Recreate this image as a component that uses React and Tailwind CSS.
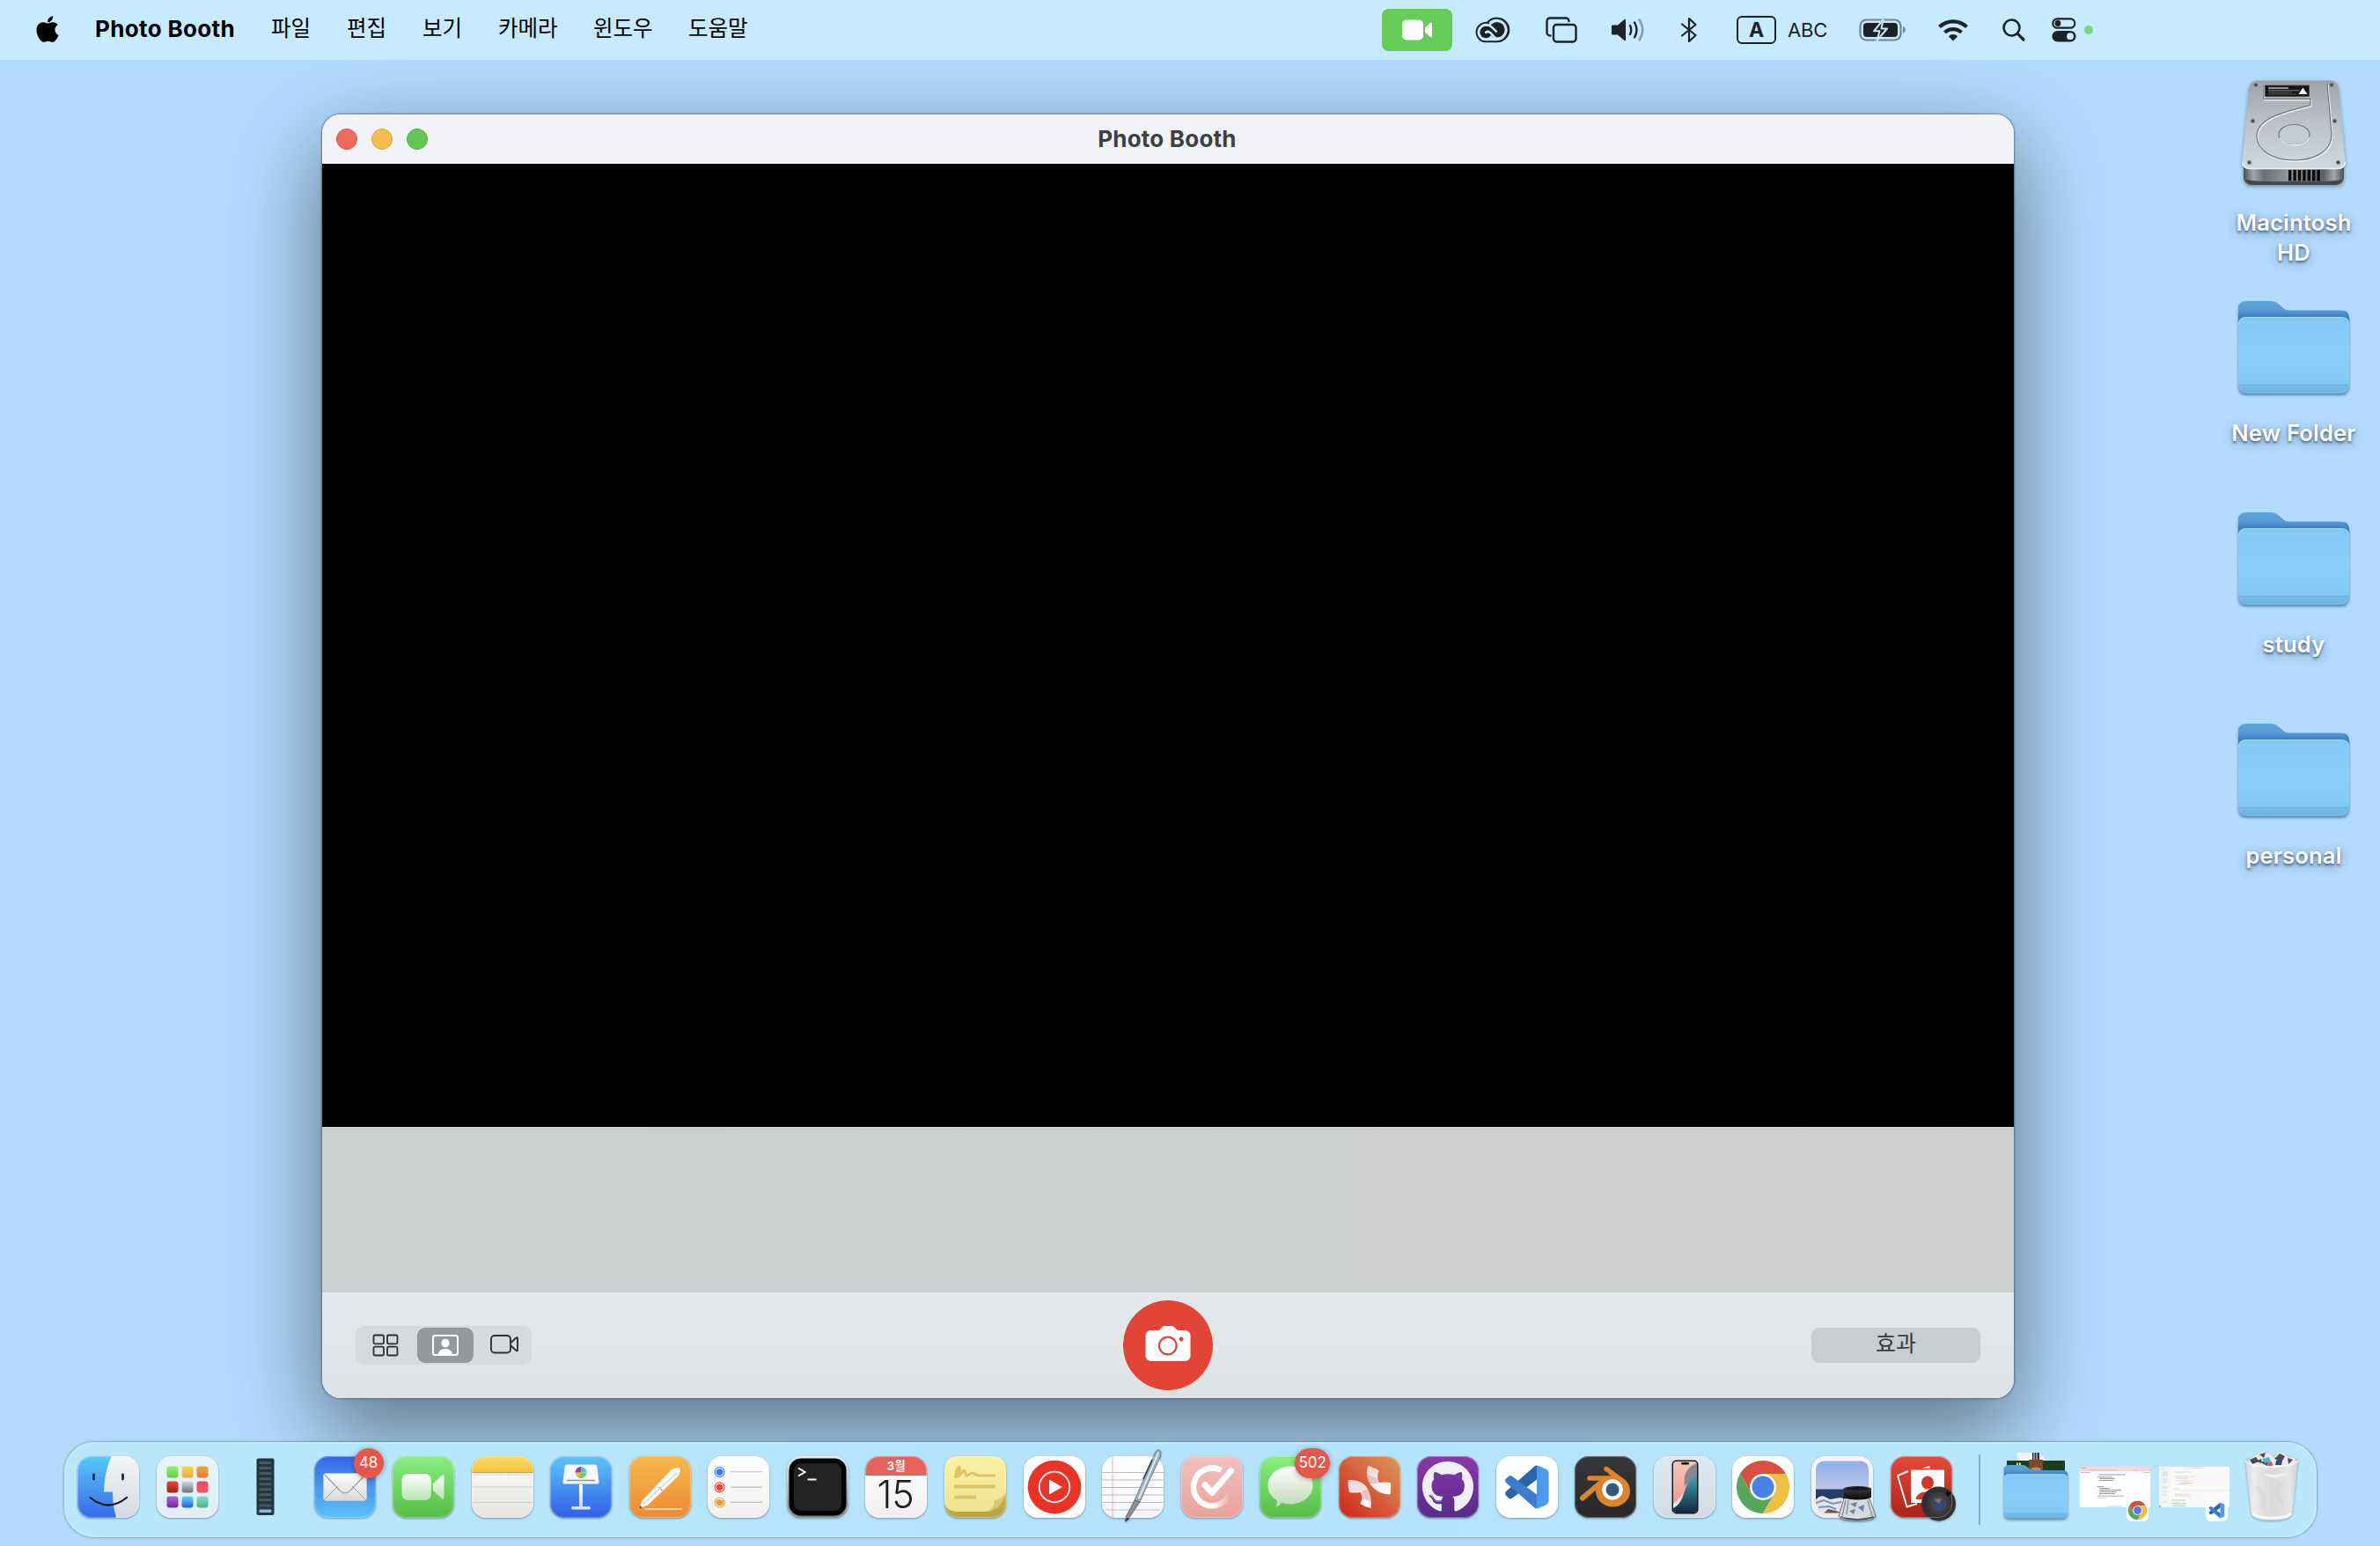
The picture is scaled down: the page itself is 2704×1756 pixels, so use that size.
import React from "react";
import { FaApple, FaGithub } from "react-icons/fa";

const FONT = "font-['Inter','Noto_Sans_CJK_KR',sans-serif]";

/* ---------- menu bar ---------- */

function MenuItem({ children, className }) {
  return <span className={`block whitespace-nowrap text-[24.5px] leading-[36px] ${className}`}>{children}</span>;
}

function StatusIcons() {
  return (
    <div className="flex h-[68px] items-center text-[#1c2328]">
      <div className="flex h-[48px] w-[80px] items-center justify-center rounded-[8px] bg-[#64cc57]">
        <svg width="36" height="24" viewBox="0 0 36 24" fill="#fff">
          <rect x="1" y="0.5" width="24" height="23" rx="5" />
          <path d="M27 9.5 L33 4 Q35 2.500 35 5 V19 Q35 21.500 33 20 L27 14.500 Z" />
        </svg>
      </div>
      <svg className="ml-[26px]" width="40" height="30" viewBox="0 0 40 30" fill="none" stroke="currentColor">
        <path d="M12 28.300 H25 A13.300 13.300 0 1 0 13.800 6.800 M25 28.300 A13.300 13.300 0 0 0 25 1.700 M12 28.300 A10.700 10.700 0 1 1 16 7.600" strokeWidth="2" />
        <circle cx="24.800" cy="14.800" r="8.800" fill="currentColor" stroke="none" />
        <circle cx="12.200" cy="17.500" r="6.800" fill="currentColor" stroke="none" />
        <path d="M12 11 H19 L28 20 L24 23.500 H20 Z" fill="currentColor" stroke="none" />
        <path d="M12.200 17.800 Q14.500 15.600 17.300 18.200 L21.500 22.800 Q24 25.400 27 25" stroke="#c7eaff" strokeWidth="2.600" strokeLinecap="round" />
        <path d="M12.500 9.300 Q16.500 9.300 19.500 12.300 L23.800 16.700" stroke="#c7eaff" strokeWidth="2.400" strokeLinecap="round" />
      </svg>
      <svg className="ml-[40px]" width="36" height="30" viewBox="0 0 36 30" fill="none" stroke="currentColor" strokeWidth="2.400">
        <path d="M6.500 21.500 H5 a3.500 3.500 0 0 1 -3.500 -3.500 V5 A3.500 3.500 0 0 1 5 1.500 H23 A3.500 3.500 0 0 1 26.500 5 V6" />
        <rect x="9" y="9" width="25.500" height="19.500" rx="3.500" />
      </svg>
      <svg className="ml-[38px]" width="40" height="28" viewBox="0 0 40 28" fill="none" stroke="currentColor" strokeWidth="2.400" strokeLinecap="round">
        <path d="M1 9.500 Q1 8.500 2 8.500 H8 L15.500 2 Q17 1 17 3 V25 Q17 27 15.500 26 L8 19.500 H2 Q1 19.500 1 18.500 Z" fill="currentColor" stroke="none" />
        <path d="M22 9 Q24.500 14 22 19" />
        <path d="M27 5.500 Q32 14 27 22.500" />
        <path d="M32.500 2.500 Q40 14 32.500 25.500" opacity=".4" />
      </svg>
      <svg className="ml-[39px]" width="20" height="30" viewBox="0 0 20 30" fill="none" stroke="currentColor" strokeWidth="2.200" strokeLinejoin="round" strokeLinecap="round">
        <path d="M2 8.500 L17.500 21 L10 28 V2 L17.500 9 L2 21.500" />
      </svg>
      <div className="ml-[44px] flex h-[32px] w-[45px] items-center justify-center rounded-[6px] border-[2.500px] border-[#1c2328] text-[23px] font-bold leading-none">A</div>
      <span className="ml-[13px] w-[47px] text-[22px] leading-[30px] tracking-[-0.2px]">ABC</span>
      <svg className="ml-[34px]" width="54" height="26" viewBox="0 0 54 26">
        <rect x="1.500" y="1.500" width="46" height="23" rx="7" fill="none" stroke="#1c2328" strokeOpacity=".5" strokeWidth="2.200" />
        <path d="M50 9 Q53 10.500 53 13 Q53 15.500 50 17 Z" fill="#1c2328" fillOpacity=".5" />
        <rect x="5" y="5" width="39" height="16" rx="4" fill="#1c2328" />
        <path d="M27.500 1.500 L17 14.300 H23.500 L20.500 25 L32 11.500 H25.500 Z" fill="#1c2328" stroke="#c7eaff" strokeWidth="2" strokeLinejoin="round" />
      </svg>
      <svg className="ml-[35px]" width="36" height="26" viewBox="0 0 36 26" fill="none" stroke="currentColor" strokeWidth="4.200">
        <path d="M2.500 9.600 A22.500 22.500 0 0 1 33.500 9.600" />
        <path d="M8.500 15.800 A14 14 0 0 1 27.500 15.800" />
        <path d="M18 25.500 L12.800 20.200 A7.500 7.500 0 0 1 23.200 20.200 Z" fill="currentColor" stroke="none" />
      </svg>
      <svg className="ml-[37px]" width="28" height="28" viewBox="0 0 28 28" fill="none" stroke="currentColor" strokeLinecap="round">
        <circle cx="11.500" cy="11.500" r="9" strokeWidth="2.600" />
        <path d="M18.300 18.300 L25 25" strokeWidth="3.200" />
      </svg>
      <svg className="ml-[29px]" width="28" height="28" viewBox="0 0 28 28">
        <rect x="1.300" y="1.300" width="25" height="10.400" rx="5.200" fill="none" stroke="#1c2328" strokeWidth="2.200" />
        <circle cx="7" cy="6.500" r="3.400" fill="#1c2328" />
        <rect x="0.500" y="15" width="27" height="12.500" rx="6.200" fill="#1c2328" />
        <circle cx="21" cy="21.200" r="3.900" fill="#c7eaff" />
      </svg>
      <span className="ml-[9px] block size-[10px] rounded-full bg-[#78d67c]" />
    </div>
  );
}

function MenuBar() {
  return (
    <header className="flex h-[68px] w-full shrink-0 items-center bg-[#c7eaff] text-black">
      <FaApple className="ml-[39px] mb-[3px] h-[34px] w-[30px]" />
      <span className="ml-[39px] block w-[200px] whitespace-nowrap pb-[3px] text-[26px] font-bold leading-[36px] tracking-[0.35px]">Photo Booth</span>
      <div className="flex pb-[5px]">
        <MenuItem className="w-[86px]">파일</MenuItem>
        <MenuItem className="w-[86px]">편집</MenuItem>
        <MenuItem className="w-[86px]">보기</MenuItem>
        <MenuItem className="w-[108px]">카메라</MenuItem>
        <MenuItem className="w-[108px]">윈도우</MenuItem>
        <MenuItem className="w-[788px]">도움말</MenuItem>
      </div>
      <StatusIcons />
    </header>
  );
}

/* ---------- Photo Booth window ---------- */

function BoothWindow() {
  return (
    <section className="ml-[366px] mt-[62px] flex h-[1458px] w-[1922px] shrink-0 flex-col overflow-hidden rounded-[21px] bg-[#e2e7ea] shadow-[0_0_2px_1px_rgba(30,60,90,0.5),0_36px_100px_4px_rgba(0,0,0,0.47)]">
      <div className="grid h-[56px] shrink-0 grid-cols-[1fr_auto_1fr] items-center border-t border-white bg-[#f2f3f6] pb-[2px]">
        <div className="flex gap-[16px] pl-[16px]">
          <span className="size-[24px] rounded-full border border-[#d95549] bg-[#ec6a5e]" />
          <span className="size-[24px] rounded-full border border-[#dba53c] bg-[#f5bf4f]" />
          <span className="size-[24px] rounded-full border border-[#50b243] bg-[#62c655]" />
        </div>
        <h1 className="mr-[2px] text-[26px] font-bold leading-none tracking-[0.2px] text-[#3d3f42]">Photo Booth</h1>
        <span />
      </div>
      <div className="h-[1094px] shrink-0 bg-[#010102]" />
      <div className="h-[188px] shrink-0 border-t border-[#d6d8d9] bg-gradient-to-r from-[#cccfd0] via-[#cdd0d0] to-[#cecfcf]" />
      <div className="grid h-[120px] shrink-0 grid-cols-[1fr_auto_1fr] items-center bg-gradient-to-b from-[#e3e8eb] via-[#e2e6e9] to-[#dde2e4]">
        <div className="ml-[38px] flex h-[44px] w-[200px] items-center rounded-[11px] bg-[#d5dadd] text-[#2d3135]">
          <div className="flex w-[70px] justify-center pr-[2px]">
            <svg width="30" height="26" viewBox="0 0 30 26" fill="none" stroke="currentColor" strokeWidth="1.800">
              <rect x="1.500" y="1.500" width="11.500" height="9.800" rx="1.800" />
              <rect x="17" y="1.500" width="11.500" height="9.800" rx="1.800" />
              <rect x="1.500" y="14.700" width="11.500" height="9.800" rx="1.800" />
              <rect x="17" y="14.700" width="11.500" height="9.800" rx="1.800" />
            </svg>
          </div>
          <div className="flex h-[40px] w-[64px] items-center justify-center rounded-[9px] bg-[#949a9c]">
            <svg width="30" height="24" viewBox="0 0 30 24">
              <rect x="1" y="1" width="28" height="22" rx="2.500" fill="none" stroke="#fff" strokeWidth="2" />
              <ellipse cx="15" cy="9.500" rx="4.500" ry="4.800" fill="#fff" />
              <path d="M6.500 23 Q7.500 16 15 16 Q22.500 16 23.500 23 Z" fill="#fff" />
            </svg>
          </div>
          <div className="flex w-[66px] justify-center pb-[2px] pl-[3px]">
            <svg width="34" height="24" viewBox="0 0 34 24" fill="none" stroke="currentColor" strokeWidth="1.900" strokeLinejoin="round">
              <rect x="2" y="2" width="22" height="19.500" rx="4" />
              <path d="M24.500 10 L30.500 4.500 Q32 3.500 32 5 V18.500 Q32 20 30.500 19 L24.500 13.500" />
            </svg>
          </div>
        </div>
        <div className="flex size-[102px] items-center justify-center rounded-full bg-[#e24536]">
          <svg className="mb-[4px]" width="52" height="42" viewBox="0 0 52 42">
            <path d="M6.500 6 H15 Q16 6 17 5 L19.500 2.300 Q20.800 1 22.500 1 H30 Q31.700 1 33 2.300 L35.500 5 Q36.500 6 37.500 6 H45.500 A6 6 0 0 1 51.500 12 V35 A6 6 0 0 1 45.500 41 H6.500 A6 6 0 0 1 0.500 35 V12 A6 6 0 0 1 6.500 6 Z" fill="#fff" />
            <circle cx="25.800" cy="23.500" r="9.800" fill="none" stroke="#e24536" strokeWidth="2.200" />
            <circle cx="41" cy="16" r="2.500" fill="#e24536" />
          </svg>
        </div>
        <div className="mr-[38px] flex justify-end">
          <button className="h-[40px] w-[192px] rounded-[9px] bg-[#c8cdd0] pb-[3px] text-[25px] leading-[37px] text-[#393c3e]">효과</button>
        </div>
      </div>
    </section>
  );
}

/* ---------- desktop icons ---------- */

function HardDrive() {
  return (
    <svg className="drop-shadow-[0_2px_2px_rgba(0,0,0,0.35)]" width="118" height="120" viewBox="0 0 118 120">
      <defs>
        <linearGradient id="hdTop" x1="0" y1="0" x2="0" y2="1">
          <stop offset="0" stopColor="#9fa3a8" />
          <stop offset=".5" stopColor="#bcc3c9" />
          <stop offset="1" stopColor="#cfd9e0" />
        </linearGradient>
        <linearGradient id="hdSide" x1="0" y1="0" x2="1" y2="0">
          <stop offset="0" stopColor="#4d5052" />
          <stop offset=".1" stopColor="#a5a8aa" />
          <stop offset=".2" stopColor="#6d7072" />
          <stop offset=".45" stopColor="#939698" />
          <stop offset=".8" stopColor="#5d6062" />
          <stop offset=".9" stopColor="#a5a8aa" />
          <stop offset="1" stopColor="#4d5052" />
        </linearGradient>
      </defs>
      <path d="M2 96 H116 V111 Q115 119 107 119 H11 Q3 119 2 111 Z" fill="url(#hdSide)" />
      <path d="M4 113 Q6 119 12 119 H106 Q112 119 114 113 Q100 116 59 115 Q18 116 4 113Z" fill="#45484a" />
      <g fill="#0b0b0c">
        {[53, 58.4, 63.8, 69.2, 74.600, 80, 85.400].map((x) => (
          <rect key={x} x={x} y="102" width="3.400" height="12.500" />
        ))}
      </g>
      <path d="M17 0.500 H101 Q109 1 110 9 L117.500 92 Q118 101 109 101 H9 Q0 101 0.500 92 L8 9 Q9 1 17 0.500 Z" fill="url(#hdTop)" />
      <path d="M0.500 93 Q1 100 9 100.500 H109 Q117 100 117.500 93" fill="none" stroke="#eef2f5" strokeWidth="1.500" />
      <path d="M25 6 V21.500 H78 V28.500 C50 36 17 42 17 64 C17 80 36 91 59 91 C84 91 102 80 102 62 L97 4" fill="none" stroke="#e9eef2" strokeWidth="1.800" transform="translate(.8 1.200)" />
      <path d="M25 6 V21.500 H78 V28.500 C50 36 17 42 17 64 C17 80 36 91 59 91 C84 91 102 80 102 62 L97 4" fill="none" stroke="#6b6a6c" strokeWidth="1.100" />
      <ellipse cx="59.500" cy="62" rx="17.500" ry="11.500" fill="#c3ccd3" stroke="#77787b" strokeWidth="1.200" />
      <path d="M43 66 Q48 74 60 74 Q72 74 77 65" fill="none" stroke="#eef3f6" strokeWidth="1.400" />
      <rect x="26.500" y="6" width="50" height="12.500" fill="#161617" stroke="#4b4b4d" strokeWidth=".8" />
      <g stroke="#dcdcdc" strokeWidth=".7">
        <path d="M30 9 H53" strokeWidth="1.300" />
        <path d="M30 11.800 H65" opacity=".8" />
        <path d="M30 14 H57" opacity=".5" />
        <path d="M30 16 H62" opacity=".5" />
      </g>
      <path d="M69.500 8.500 L74.500 16 H64.500 Z" fill="#fff" />
      {[[16, 5.500], [102, 5.500], [12.500, 46.500], [105.500, 46.500], [8.500, 93.500], [109.500, 93.500]].map(([x, y]) => (
        <g key={`${x}-${y}`}>
          <circle cx={x} cy={y} r="2.500" fill="#777a7d" />
          <circle cx={x} cy={y} r="1.100" fill="#26282a" />
        </g>
      ))}
    </svg>
  );
}

function Folder({ width = 126, height = 106, id }) {
  return (
    <svg className="block drop-shadow-[0_2px_1.5px_rgba(0,40,80,0.5)]" width={width} height={height} viewBox="0 0 126 106" preserveAspectRatio="none">
      <defs>
        <linearGradient id={`${id}b`} x1="0" y1="0" x2="0" y2="1">
          <stop offset="0" stopColor="#5fa3d8" />
          <stop offset=".18" stopColor="#569ad3" />
          <stop offset=".3" stopColor="#3880c7" />
        </linearGradient>
        <linearGradient id={`${id}f`} x1="0" y1="0" x2="0" y2="1">
          <stop offset="0" stopColor="#84c8f6" />
          <stop offset=".5" stopColor="#89cdf8" />
          <stop offset=".86" stopColor="#84c9f5" />
          <stop offset=".9" stopColor="#79bfec" />
          <stop offset="1" stopColor="#6db5e4" />
        </linearGradient>
      </defs>
      <path d="M0 8 Q0 0 9 0 H37 Q41 0 45 3 L51 8 Q54 10.500 58 10.500 H117 Q126 10.500 126 19 V60 H0 Z" fill={`url(#${id}b)`} />
      <path d="M0 26 Q0 18 9 18 H117 Q126 18 126 26 V96 Q125.500 105 116 105 H10 Q0.500 105 0 96 Z" fill={`url(#${id}f)`} />
      <path d="M1 26 Q1 18.500 9 18.500 H117 Q125 18.500 125 26" fill="none" stroke="#a5dafb" />
      <path d="M1 95.500 H125" stroke="#67acd9" strokeWidth=".9" />
      <path d="M1 99 H125" stroke="#6bb1de" strokeWidth=".7" />
    </svg>
  );
}

function Label({ children }) {
  return (
    <span className="block w-[170px] text-center text-[25.5px] font-semibold leading-[34px] tracking-[0.2px] text-white [text-shadow:0_2px_3px_rgba(0,20,50,0.55),0_3px_12px_rgba(0,20,50,0.4)]">
      {children}
    </span>
  );
}

function DesktopIcons() {
  return (
    <div className="ml-auto mr-[13px] flex w-[170px] flex-col items-center pt-[23px]">
      <div className="flex h-[251px] flex-col items-center">
        <HardDrive />
        <div className="mt-[25px]">
          <Label>Macintosh<br />HD</Label>
        </div>
      </div>
      {["New Folder", "study", "personal"].map((name, i) => (
        <div key={name} className="flex h-[240px] flex-col items-center">
          <Folder id={`folder${i}`} />
          <div className="mt-[27px]">
            <Label>{name}</Label>
          </div>
        </div>
      ))}
    </div>
  );
}

/* ---------- dock ---------- */

function Grad({ id, from, to, diagonal }) {
  return (
    <linearGradient id={id} x1="0" y1={diagonal ? "1" : "0"} x2={diagonal ? "1" : "0"} y2={diagonal ? "0" : "1"}>
      <stop offset="0" stopColor={from} />
      <stop offset="1" stopColor={to} />
    </linearGradient>
  );
}

/* Rounded application tile, 70 by 70, that its glyph is drawn on. */
function Tile({ id, from, to, diagonal, children }) {
  return (
    <svg className="block shrink-0 overflow-visible drop-shadow-[0_1px_1px_rgba(0,0,0,0.35)]" width="70" height="70" viewBox="0 0 70 70">
      <defs>
        <Grad id={id} from={from} to={to} diagonal={diagonal} />
        <clipPath id={`${id}c`}><rect width="70" height="70" rx="16" /></clipPath>
      </defs>
      <rect width="70" height="70" rx="16" fill={`url(#${id})`} />
      {children}
      <rect x=".5" y=".5" width="69" height="69" rx="15.500" fill="none" stroke="#fff" strokeOpacity=".28" />
    </svg>
  );
}

function Badge({ children, className }) {
  return (
    <span className={`absolute -top-[9px] flex h-[34px] items-center justify-center rounded-full bg-[#e65649] text-[17px] text-white shadow-[0_1px_6px_rgba(0,0,0,0.35)] ${className}`}>
      {children}
    </span>
  );
}

function Finder() {
  return (
    <Tile id="finder" from="#f5f5f6" to="#d3d9e5">
      <defs><Grad id="finderBlue" from="#5ac8f8" to="#356aec" /></defs>
      <g clipPath="url(#finderc)">
        <path d="M0 0 H38.500 Q30 20 30 40.500 H40 Q40 57 44 70 H0 Z" fill="url(#finderBlue)" />
      </g>
      <path d="M18.500 21 V26 M51.500 21 V26" stroke="#1c2733" strokeWidth="2.800" strokeLinecap="round" />
      <path d="M14.500 47 Q35 64 56 47" fill="none" stroke="#15191f" strokeWidth="2.200" strokeLinecap="round" />
    </Tile>
  );
}

const PAD = [
  ["#96f264", "#5fcf43"], ["#f8d650", "#f2a93b"], ["#eea743", "#e47a33"],
  ["#e0483a", "#a82217"], ["#cfdbe0", "#6e6f70"], ["#ea4a5f", "#ee5a63"],
  ["#b95be0", "#6c2aa8"], ["#5fd8fb", "#2c5be8"], ["#7fe0d6", "#4fb377"],
];

function Launchpad() {
  return (
    <Tile id="launch" from="#e6f4fc" to="#e1eef6">
      {PAD.map(([a, b], i) => (
        <g key={i}>
          <defs><Grad id={`pad${i}`} from={a} to={b} /></defs>
          <rect x={11.500 + (i % 3) * 17} y={11.500 + Math.floor(i / 3) * 17} width="13" height="13" rx="3.200" fill={`url(#pad${i})`} />
        </g>
      ))}
    </Tile>
  );
}

function Meter() {
  return (
    <svg className="block w-[70px] shrink-0" height="70" viewBox="0 0 70 70">
      <rect x="24.500" y="2.500" width="20" height="64.500" rx="2" fill="#26343d" />
      {[0, 1, 2, 3, 4, 5, 6, 7, 8].map((i) => (
        <rect key={i} x="27.500" y={6 + i * 6.050} width="14" height="3" rx="1" fill="#42596a" />
      ))}
      <rect x="27.500" y="60.500" width="14" height="3.500" rx="1" fill="#7fbdf2" />
    </svg>
  );
}

function Mail() {
  return (
    <Tile id="mail" from="#3468e8" to="#5ac3f8">
      <defs><Grad id="envelope" from="#fdfdfd" to="#dadada" /></defs>
      <rect x="10.500" y="19.500" width="49" height="31" rx="3" fill="url(#envelope)" stroke="#c9ced6" strokeWidth=".6" />
      <path d="M11.500 49.500 L27 34 M58.500 49.500 L43 34" stroke="#9c9c9c" strokeWidth="1" />
      <path d="M11.500 20.500 L29 39 Q35 44.500 41 39 L58.500 20.500" fill="none" stroke="#a3a3a3" strokeWidth="1.300" />
    </Tile>
  );
}

function FaceTime() {
  return (
    <Tile id="ft" from="#87ee80" to="#57bd45">
      <defs><Grad id="ftg" from="#ffffff" to="#b6e5ad" /></defs>
      <rect x="10.500" y="20" width="33.500" height="30" rx="7" fill="url(#ftg)" />
      <path d="M46 31 L56 22 Q58.500 20.500 58.500 23.500 V46.500 Q58.500 49.500 56 48 L46 39 Z" fill="url(#ftg)" />
    </Tile>
  );
}

function Notes() {
  return (
    <Tile id="notes" from="#fdfdfd" to="#e6e4df">
      <defs><Grad id="notesTop" from="#fbdb6b" to="#f6c53a" /></defs>
      <path clipPath="url(#notesc)" d="M0 0 H70 V18.500 H0 Z" fill="url(#notesTop)" />
      <path d="M0 18.700 H70" stroke="#9f8d68" strokeWidth=".9" />
      <path d="M1 21.200 H69" stroke="#b5b5b2" strokeWidth=".9" strokeDasharray="1.300 1.300" />
      <path d="M0 35 H70 M0 52.500 H70" stroke="#cfcdca" strokeWidth="1.100" />
    </Tile>
  );
}

function Keynote() {
  return (
    <Tile id="key" from="#5ec5f9" to="#2f5fe6">
      <defs><Grad id="stand" from="#ffffff" to="#c9d3e6" /></defs>
      <path d="M19 9.500 H51 Q53 9.500 53.300 11.500 L55.500 29 Q55.800 31.500 53.500 31.500 H16.500 Q14.200 31.500 14.500 29 L16.700 11.500 Q17 9.500 19 9.500 Z" fill="#f5f8fc" />
      <path d="M19 27.500 H51" stroke="#8b9cb8" strokeWidth="1.600" />
      <path d="M35 18.500 V12 A6.500 6.500 0 0 1 41.500 18.500 Z" fill="#58b7ea" />
      <path d="M35 18.500 H41.500 A6.500 6.500 0 0 1 31 23.700 Z" fill="#84ca55" />
      <path d="M35 18.500 L31 23.700 A6.500 6.500 0 0 1 28.500 18.500 Z" fill="#f3b73f" />
      <path d="M35 18.500 H28.500 A6.500 6.500 0 0 1 35 12 Z" fill="#b33d6e" />
      <rect x="33" y="32" width="4" height="26" fill="url(#stand)" />
      <rect x="24" y="57" width="22" height="3.500" rx="1.700" fill="#dfe6f2" />
    </Tile>
  );
}

function Pages() {
  return (
    <Tile id="pages" from="#f5b84b" to="#ef8a37">
      <path d="M18 60 H59" stroke="#ffd9ad" strokeWidth="1.800" strokeLinecap="round" />
      <path d="M11.500 59.500 L14 51 L47 16 Q53 11.500 57 13.500 Q59.500 17 54.500 23.500 L21 55.500 Z" fill="#fafafa" />
      <path d="M33.500 35 L37.500 39" stroke="#a1a1a1" strokeWidth="1.400" />
      <path d="M16 54 L54 19" stroke="#d4d4d4" strokeWidth="1.200" />
      <path d="M11.500 59.500 L12.500 56 L14.800 58.500 Z" fill="#59554f" />
    </Tile>
  );
}

function Reminders() {
  return (
    <Tile id="rem" from="#ffffff" to="#f0efed">
      {["#3478f6", "#e5483b", "#f09a37"].map((c, i) => (
        <g key={c}>
          <circle cx="13.500" cy={18 + i * 17.300} r="5.400" fill="#fff" stroke={c} strokeWidth="1.100" />
          <circle cx="13.500" cy={18 + i * 17.300} r="3.700" fill={c} />
          <path d={`M26 ${17.800 + i * 17.300} H62`} stroke="#bcbcc0" strokeWidth="1.100" />
        </g>
      ))}
    </Tile>
  );
}

function Terminal() {
  return (
    <Tile id="term" from="#e3e8ea" to="#77787a">
      <rect x="2.500" y="2.500" width="65" height="65" rx="13.500" fill="#000" />
      <rect x="8" y="8" width="54" height="54" rx="8" fill="#232324" />
      <path d="M13 13.500 L20.500 18 L13 22.500" fill="none" stroke="#fff" strokeWidth="2" />
      <path d="M23.500 26.500 H33.500" stroke="#fff" strokeWidth="2" />
    </Tile>
  );
}

function Calendar() {
  return (
    <Tile id="cal" from="#ffffff" to="#f0efee">
      <path clipPath="url(#calc)" d="M0 0 H70 V22 H0 Z" fill="#e5635a" />
      <text x="35" y="16" textAnchor="middle" fontSize="13.500" fontWeight="700" fill="#fff">3월</text>
      <text x="34.500" y="59" textAnchor="middle" fontSize="43" fontWeight="300" fill="#1d1d1f" letterSpacing="-.3">15</text>
    </Tile>
  );
}

function Stickies() {
  return (
    <Tile id="stick" from="#d9c04f" to="#bba343">
      <defs><Grad id="stickTop" from="#fcf2a3" to="#eee393" /></defs>
      <path d="M16 0 H54 Q70 0 70 16 V40 C68 52 60 63 46 63 H16 Q0 63 0 50 V16 Q0 0 16 0 Z" fill="url(#stickTop)" />
      <path d="M70 40 C64 52 56 50 56 50 C58 57 52 62 46 63 C58 63 68 55 70 40 Z" fill="#c8ae52" opacity=".55" />
      <path d="M12.500 25 C13 15 17 9 17.500 14 C17.500 18 13 26 17 22 C20 18 23 14 24 18 C24 24 26 22 29 20 C33 17 34 22 40 22 H58" fill="none" stroke="#dcc565" strokeWidth="3" />
      <path d="M11 34.500 H58 M11 46.500 H36" stroke="#dcc565" strokeWidth="4" />
    </Tile>
  );
}

function Music() {
  return (
    <Tile id="yt" from="#ffffff" to="#ffffff">
      <circle cx="35" cy="35" r="30.300" fill="#ea3324" />
      <circle cx="35" cy="35" r="17.300" fill="none" stroke="#fff" strokeWidth="1.800" />
      <path d="M29 26.500 L44 35 L29 43.500 Z" fill="#fff" />
    </Tile>
  );
}

function TextEdit() {
  return (
    <Tile id="te" from="#ffffff" to="#f7f7f7">
      <path d="M0 18.500 H70 M0 27 H70 M0 35.500 H70 M0 44 H70 M0 52.500 H70 M4 61 H66" stroke="#b9bbbd" strokeWidth="1" />
      <path d="M12 0.500 V69.500" stroke="#f1b6b6" strokeWidth="1.100" />
      <path d="M60.500 -4 Q64 -10 67 -5 L66.500 0 L43 52 L37 50 Z" fill="#9fb2c4" stroke="#5d6e7e" strokeWidth=".8" />
      <path d="M64 -4 L42 48" stroke="#e6eef5" strokeWidth="1.800" />
      <path d="M57 4 L47 26" stroke="#35414c" strokeWidth="1.800" />
      <path d="M37 50 L43 52 L30 71.500 L26.500 74 L27 69 Z" fill="#8c8f92" stroke="#4f5356" strokeWidth=".7" />
      <path d="M28.500 69 L26.500 74.500 L31 71 Z" fill="#2d2f31" />
    </Tile>
  );
}

function Check() {
  return (
    <Tile id="chk" from="#f1c1bd" to="#e9a29b">
      <defs>
        <linearGradient id="ring" x1="0" y1="0" x2="1" y2="0">
          <stop offset="0" stopColor="#fff" />
          <stop offset="1" stopColor="#fff" stopOpacity="0" />
        </linearGradient>
      </defs>
      <path d="M45.500 16 A21.500 21.500 0 1 0 35 56.500" fill="none" stroke="#fff" strokeWidth="6.500" />
      <path d="M35 56.500 A21.500 21.500 0 0 0 55.500 40" fill="none" stroke="url(#ring)" strokeWidth="6.500" />
      <path d="M27 32.500 L35 41.500 L56.500 16.500" fill="none" stroke="#eeb4af" strokeWidth="11" strokeLinecap="round" strokeLinejoin="round" opacity=".55" />
      <path d="M27 32.500 L35 41.500 L56.500 16.500" fill="none" stroke="#fff" strokeWidth="7" strokeLinecap="round" strokeLinejoin="round" />
    </Tile>
  );
}

function Messages() {
  return (
    <Tile id="msg" from="#86f07f" to="#56bc45">
      <defs><Grad id="bubble" from="#ffffff" to="#bcd9b6" /></defs>
      <path d="M35 11.500 C49 11.500 60.500 21 60.500 33 C60.500 45 49 54.500 35 54.500 C31 54.500 28 54 25 52.800 C23.500 55.500 21 57.500 18 58 C20 55 20 53 19.800 50 C13 46 9.500 40 9.500 33 C9.500 21 21 11.500 35 11.500 Z" fill="url(#bubble)" />
    </Tile>
  );
}

function Ribbon() {
  return (
    <Tile id="rib" from="#cf2418" to="#dc9a5c" diagonal>
      <defs><Grad id="ribg" from="#f0d2d4" to="#ffffff" /></defs>
      <path d="M33 11 Q40 12 45.500 16.500 Q42.500 25 46 30 Q52 29 59 30 Q60 36 58.500 43.500 Q44 43 36.500 33 Q29.500 22 33 11 Z" fill="url(#ribg)" />
      <path d="M32 20 Q38 24 43.700 25 Q44 28 46 30 Q40 32 35 31 Q32 26 32 20 Z" fill="#e4b0b3" opacity=".7" />
      <path d="M10.500 27 Q24 26 31 34 Q38 44 36.500 59 Q30 58 24.500 54 Q28 46 24.500 41 Q19 42 12 41 Q10 34 10.500 27 Z" fill="url(#ribg)" />
      <path d="M25 41 Q29 38 33.500 38 Q37 45 37 52 Q31 50 26 47 Q26.500 44 25 41 Z" fill="#e4b0b3" opacity=".7" />
    </Tile>
  );
}

function Github() {
  return (
    <Tile id="gh" from="#8938ab" to="#552c86">
      <FaGithub x="5" y="5" size={60} color="#eff0f4" />
    </Tile>
  );
}

function CodeMark() {
  return (
    <>
      <path d="M46 10.500 L48 25 L17.500 48 Q15.500 49 14 47.500 L10.500 44 Q9 42 11 40 L44 11 Z" fill="#2a64ab" />
      <path d="M46 59.500 L48 45 L17.500 22.500 Q15.500 21.500 14 23 L10.500 26 Q9 28 11 30 L44 59 Z" fill="#3a7dd0" />
      <path d="M46 10.500 Q47.500 10.500 49 11.200 L57 15 Q59.500 16.300 59.500 19 V51 Q59.500 53.700 57 55 L49 58.800 Q47.500 59.500 46 59.500 Z" fill="#4c9bea" />
    </>
  );
}

function ChromeMark() {
  return (
    <>
      <path d="M9 20 A30 30 0 0 1 61 20 H35 L22 42.500 Z" fill="#d95040" />
      <path d="M9 20 A30 30 0 0 0 35 65 L48 42.500 L35 35 L22 42.500 Z" fill="#58a55c" />
      <path d="M61 20 A30 30 0 0 1 35 65 L48 42.500 L35 20 Z" fill="#f2be42" />
      <circle cx="35" cy="35" r="15" fill="#fff" />
      <circle cx="35" cy="35" r="12.500" fill="#4a80e8" />
    </>
  );
}

function Blender() {
  return (
    <Tile id="bl" from="#373737" to="#282828">
      <path d="M9 47.500 L32 28" stroke="#dd842f" strokeWidth="6" strokeLinecap="round" />
      <path d="M17 25 H42" stroke="#dd842f" strokeWidth="5.500" strokeLinecap="round" />
      <path d="M36 14.500 L52 26.500" stroke="#dd842f" strokeWidth="5.500" strokeLinecap="round" />
      <ellipse cx="43.500" cy="39.500" rx="19.500" ry="18" fill="#dd842f" />
      <path d="M28 22.500 L44 18 L56 27 L44 32 L28 36 Z" fill="#dd842f" />
      <circle cx="43" cy="38" r="11.800" fill="#fff" />
      <circle cx="43" cy="38" r="7.500" fill="#345883" />
      <path d="M26.500 22.200 H41 L36 17.500 Z" fill="#343434" />
    </Tile>
  );
}

function Phone() {
  return (
    <Tile id="ph" from="#dce9f1" to="#d1dde4">
      <defs>
        <Grad id="wall" from="#f5c9b4" to="#ef8f8c" />
        <Grad id="wave" from="#46a3b5" to="#0f2945" />
        <clipPath id="screen"><rect x="22" y="6" width="27" height="58" rx="3.500" /></clipPath>
      </defs>
      <rect x="20.500" y="4.500" width="30" height="61" rx="5" fill="#16191d" />
      <g clipPath="url(#screen)">
        <rect x="22" y="6" width="27" height="58" fill="url(#wall)" />
        <path d="M49 8 C37 12 33 22 35 34 L49 24 Z" fill="#8a8794" />
        <path d="M22 54 C30 48 34 42 35 34 L28 64 H22 Z" fill="#f3e6e4" />
        <path d="M49 22 C38 28 36 36 34 43 C32 50 27 57 22 59 V64 H49 Z" fill="url(#wave)" />
      </g>
      <rect x="31" y="7" width="9" height="2.600" rx="1.300" fill="#000" />
    </Tile>
  );
}

function Preview() {
  return (
    <Tile id="pv" from="#f5f5f5" to="#ececec">
      <defs>
        <Grad id="sky" from="#90aee8" to="#bdc6ea" />
        <Grad id="cap" from="#3a3a3c" to="#060606" />
        <clipPath id="photo"><rect x="5" y="5.500" width="60" height="59" rx="9" /></clipPath>
      </defs>
      <g clipPath="url(#photo)">
        <rect x="5" y="5" width="60" height="33" fill="url(#sky)" />
        <rect x="5" y="37.500" width="60" height="12" fill="#263d6b" />
        <path d="M5 47 L13 45 L21 49 L33 47 L42 50 L65 48 V65 H5 Z" fill="#dfe6ef" />
        <path d="M5 53 L14 50 L24 54 L34 52 M8 58 L20 57 L28 60" fill="none" stroke="#7e93ae" strokeWidth="2" />
        <path d="M14 65 L19 60 L28 62 L35 65 Z" fill="#6d5b45" />
        <path d="M5 44 L9 46 L5 49 Z" fill="#33302e" />
      </g>
      <path d="M37 48 H66 L73 68 Q73 73 52 73.500 Q31 73 31 68 Z" fill="#d5d9dc" fillOpacity=".92" stroke="#6c7073" strokeWidth="1" />
      <path d="M39 50 L35 68 M64 50 L69 68 M42 50 L40 66" stroke="#8c9194" strokeWidth="1.400" />
      <path d="M44 54 L52 52 L50 58 Z M53 58 L60 55 L59 63 Z M43 62 L50 60 L48 66 Z" fill="#6984a2" />
      <path d="M33 69 Q52 75 71 69" fill="none" stroke="#3f4345" strokeWidth="1.600" />
      <path d="M36.500 37 V47 Q52 52 68 47 V37 Z" fill="url(#cap)" />
      <ellipse cx="52.300" cy="37" rx="15.800" ry="3" fill="#2f2f31" />
      <ellipse cx="52.300" cy="36.800" rx="12.500" ry="1.800" fill="#18181a" />
    </Tile>
  );
}

function PhotoBooth() {
  return (
    <Tile id="pb" from="#e64a3a" to="#ab2318">
      <path d="M20 17 L8 22 L18.500 57.500 L30 54" fill="none" stroke="#fff" strokeWidth="1.900" />
      <path d="M36 13.500 L44 11 L45 13.500 Z" fill="#fff" />
      <rect x="23" y="15.500" width="38" height="37.500" fill="#fff" />
      <ellipse cx="42" cy="30" rx="7" ry="7.500" fill="#d2382b" />
      <path d="M28.500 49 Q30 41.500 38 40.500 H46 Q54 41 56 49 Z" fill="#d2382b" />
      <circle cx="54.500" cy="54" r="19.500" fill="#303132" />
      <path d="M64 39 L69 42 L61 50 Z" fill="#0c0c0c" />
      <circle cx="54.500" cy="54" r="13" fill="#3a3b3c" />
      <circle cx="54.500" cy="54" r="9" fill="#47484b" />
      <circle cx="54.500" cy="54" r="6.500" fill="#473f6e" />
      <path d="M50 50 A6.500 6.500 0 0 1 58 49 L54.500 54 Z" fill="#7c6b78" />
      <path d="M60 56 A6.500 6.500 0 0 1 52 60 L54.500 54 Z" fill="#2b4aa0" />
    </Tile>
  );
}

function DownloadsFolder() {
  return (
    <div className="relative h-[76px] w-[72px] shrink-0">
      <svg className="block" width="72" height="76" viewBox="0 0 72 76">
        <path d="M15 1 H40 L50 12 V24 H15 Z" fill="#f2f3f4" />
        <path d="M32 1 H40 V10 H32 Z" fill="#333638" />
        <path d="M34 1 V9 M37 1 V9" stroke="#e8e8e8" strokeWidth="1" />
        <rect x="3" y="10" width="66" height="24" fill="#173d1d" />
        <path d="M15 12.500 V15 M18 12.500 V15 M15 17 V20 M18 17 V20" stroke="#e6e04a" strokeWidth="2" />
        <rect x="28" y="9" width="16" height="22" fill="#7c4a2b" />
        <ellipse cx="36" cy="20" rx="6" ry="2.500" fill="#c08a60" />
      </svg>
      <div className="absolute left-0 top-[15px]">
        <Folder id="dockFolder" width={72} height={61} />
      </div>
    </div>
  );
}

function Thumb({ children, mark }) {
  return (
    <div className="relative h-[62px] w-[80px] shrink-0">
      <svg className="block" width="80" height="46" viewBox="0 0 80 46">{children}</svg>
      <svg className="absolute right-[2px] top-[37px]" width="25" height="25" viewBox="0 0 70 70">
        <rect width="70" height="70" rx="16" fill="#fff" />
        {mark}
      </svg>
    </div>
  );
}

function BrowserThumb() {
  return (
    <Thumb mark={<ChromeMark />}>
      <rect width="80" height="46" fill="#fff" />
      <rect width="80" height="5" fill="#f7d9dd" />
      <path d="M1 1.500 H7" stroke="#d99" strokeWidth="1" />
      <path d="M8 3.800 H43 M61 3.800 H67" stroke="#d0bfc2" strokeWidth=".9" />
      <path d="M1 6.500 H12 M72 6.500 H79" stroke="#b9bbc2" strokeWidth=".9" />
      <g stroke="#8e8e8e" strokeWidth=".9">
        <path d="M21 9 H52 M20 11.800 H37 M22 13.500 H40 M22 15.500 H38" />
        <path d="M20 22.500 H27 M22 24.500 H34 M22 26.500 H47 M22 28.500 H42 M22 30.500 H40" />
        <path d="M20 33.200 H50" stroke="#8fae86" />
        <path d="M20 35.500 H30 M32 45 H48" stroke="#cfcfcf" />
      </g>
    </Thumb>
  );
}

function EditorThumb() {
  return (
    <Thumb mark={<CodeMark />}>
      <rect width="80" height="46" fill="#fafafb" />
      <rect width="12" height="46" fill="#f4f4f6" />
      <path d="M3 2 H5 M30 1.500 H48" stroke="#d5d9de" strokeWidth=".8" />
      <g stroke="#c8cbd0" strokeWidth=".7">
        <path d="M4 6 H10 M4 8 H9 M4 10 H10 M4 14 H9 M4 16 H10 M4 18 H8 M4 22 H9 M4 24 H10 M4 28 H9 M4 32 H8 M4 40 H9" />
        <path d="M18 11 H42 M20 16 H38 M20 20 H34 M18 31 H34 M13 41 H24" />
      </g>
      <g stroke="#e9c9a6" strokeWidth=".8">
        <path d="M17 6 H37 M19 13 H33 M24 18.500 H40 M17 25 H23 M18 33 H36" />
      </g>
      <path d="M14 38 H30 M15 42 H31 M15 44.500 H30" stroke="#a9c8ad" strokeWidth=".8" />
      <path d="M12 27 H80" stroke="#e4e5e8" strokeWidth=".7" />
      <rect x="0" y="44" width="2" height="2" fill="#e8a05c" />
    </Thumb>
  );
}

function Trash() {
  return (
    <svg className="block shrink-0 drop-shadow-[0_1px_1px_rgba(0,0,0,0.3)]" width="62" height="80" viewBox="0 0 62 80">
      <defs>
        <linearGradient id="bin" x1="0" y1="0" x2="1" y2="0">
          <stop offset="0" stopColor="#d3d4d5" />
          <stop offset=".15" stopColor="#ececed" />
          <stop offset=".5" stopColor="#d9d9d9" />
          <stop offset=".85" stopColor="#e6e6e7" />
          <stop offset="1" stopColor="#cbcdcf" />
        </linearGradient>
      </defs>
      <ellipse cx="31" cy="11" rx="30" ry="6" fill="#c9cdd0" />
      <path d="M4 11 L12 5 L16 3 L20 0 L28 3 L34 8 L38 1 L46 3 L50 7 L57 8 L58 13 L50 19 H10 Z" fill="#e9e9ea" />
      <path d="M1 11 Q4 17 31 18.500 Q58 17 61 11 L54.500 70 Q53 79 31 79 Q9 79 7.500 70 Z" fill="url(#bin)" />
      <path d="M6 10 L13 7 L17 12 L9 15 Z M17 4 L24 2 L22 8 Z M34 9 L40 3 L46 6 L42 13 Z M49 8 L55 10 L50 15 Z M18 13 L27 10 L26 17 Z M13 12 L19 9 L20 14 Z" fill="#4a4c52" />
      <path d="M20 9 L28 7 L30 12 L23 14 Z" fill="#4db5c9" />
      <path d="M36 11 L43 10 L42 16 L35 16 Z" fill="#39438a" />
      <path d="M26 13 L31 12 L32 17 L27 17 Z" fill="#c65a4f" />
      <path d="M1 11 Q4 17 31 18.500 Q58 17 61 11" fill="none" stroke="#fbfbfb" strokeWidth="1.300" />
      <path d="M22 26 Q34 36 50 24 Q40 28 22 26 Z" fill="#f2f2f2" />
      <path d="M14 40 Q24 50 20 66 M40 36 Q34 50 44 62" fill="none" stroke="#cecece" strokeWidth="5" opacity=".3" />
      <path d="M9 71 Q14 76 31 76 Q48 76 53 71" fill="none" stroke="#fafafa" strokeWidth="3" />
    </svg>
  );
}

function Dock() {
  return (
    <footer className="ml-[73px] flex h-[108px] w-[2559px] shrink-0 items-start rounded-[34px] border-[2px] border-[#c5ebfe] bg-gradient-to-r from-[#b9e7fb] via-[#b4e2fb] to-[#b9e7fb] shadow-[0_0_2px_1px_rgba(50,90,120,0.4)]">
      <div className="ml-[13px] mt-[14px] flex shrink-0 gap-[19.560px]">
        <Finder />
        <Launchpad />
        <Meter />
        <div className="relative">
          <Mail />
          <Badge className="-right-[9px] w-[34px]">48</Badge>
        </div>
        <FaceTime />
        <Notes />
        <Keynote />
        <Pages />
        <Reminders />
        <Terminal />
        <Calendar />
        <Stickies />
        <Music />
        <TextEdit />
        <Check />
        <div className="relative">
          <Messages />
          <Badge className="-right-[10px] w-[40px]">502</Badge>
        </div>
        <Ribbon />
        <Github />
        <Tile id="vs" from="#ffffff" to="#ffffff"><CodeMark /></Tile>
        <Blender />
        <Phone />
        <Tile id="chr" from="#ffffff" to="#fbfcfd"><ChromeMark /></Tile>
        <Preview />
        <PhotoBooth />
      </div>
      <span className="ml-[30px] mt-[12px] block h-[80px] w-[2px] shrink-0 bg-[#7fadc5]" />
      <div className="ml-[27px] mt-[9px]"><DownloadsFolder /></div>
      <div className="ml-[14px] mt-[26px] flex gap-[10px]">
        <BrowserThumb />
        <EditorThumb />
      </div>
      <div className="ml-[17px] mt-[8px]"><Trash /></div>
    </footer>
  );
}

export default function App() {
  return (
    <div className={`flex h-[1756px] w-[2704px] flex-col overflow-hidden bg-[#b3dbfd] ${FONT}`}>
      <MenuBar />
      <main className="flex h-[1570px] shrink-0">
        <BoothWindow />
        <DesktopIcons />
      </main>
      <Dock />
    </div>
  );
}
